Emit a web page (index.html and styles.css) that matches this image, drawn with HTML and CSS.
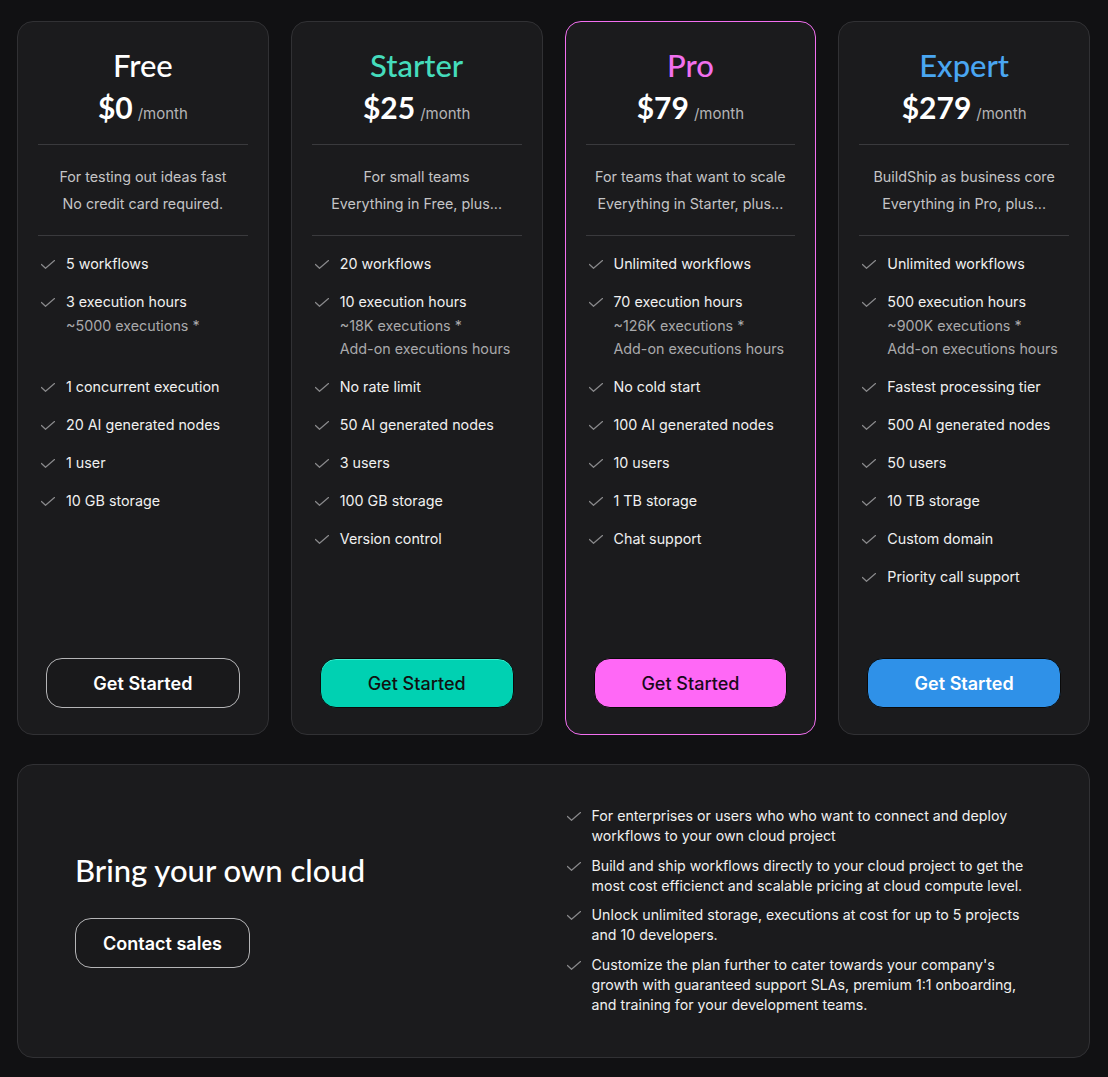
FILE: index.html
```html
<!DOCTYPE html>
<html lang="en">
<head>
<meta charset="utf-8">
<title>Pricing</title>
<link rel="stylesheet" href="styles.css">
</head>
<body>
<main class="page">
  <section class="plans">
    <article class="plan">
      <header class="plan-head">
        <h2 class="plan-name">Free</h2>
        <p class="plan-price"><span class="amount">$0</span><span class="per">/month</span></p>
      </header>
      <div class="plan-desc"><p>For testing out ideas fast</p><p>No credit card required.</p></div>
      <ul class="features">
        <li><svg class="check" viewBox="0 0 14 9"><polyline points="0.5,4.5 4.5,8.3 13.5,0.5"/></svg><div><p>5 workflows</p></div></li>
        <li><svg class="check" viewBox="0 0 14 9"><polyline points="0.5,4.5 4.5,8.3 13.5,0.5"/></svg><div><p>3 execution hours</p><p class="sub">~5000 executions *</p><p class="sub">&nbsp;</p></div></li>
        <li><svg class="check" viewBox="0 0 14 9"><polyline points="0.5,4.5 4.5,8.3 13.5,0.5"/></svg><div><p>1 concurrent execution</p></div></li>
        <li><svg class="check" viewBox="0 0 14 9"><polyline points="0.5,4.5 4.5,8.3 13.5,0.5"/></svg><div><p>20 AI generated nodes</p></div></li>
        <li><svg class="check" viewBox="0 0 14 9"><polyline points="0.5,4.5 4.5,8.3 13.5,0.5"/></svg><div><p>1 user</p></div></li>
        <li><svg class="check" viewBox="0 0 14 9"><polyline points="0.5,4.5 4.5,8.3 13.5,0.5"/></svg><div><p>10 GB storage</p></div></li>
      </ul>
      <button class="btn btn-outline">Get Started</button>
    </article>

    <article class="plan">
      <header class="plan-head">
        <h2 class="plan-name starter">Starter</h2>
        <p class="plan-price"><span class="amount">$25</span><span class="per">/month</span></p>
      </header>
      <div class="plan-desc"><p>For small teams</p><p>Everything in Free, plus...</p></div>
      <ul class="features">
        <li><svg class="check" viewBox="0 0 14 9"><polyline points="0.5,4.5 4.5,8.3 13.5,0.5"/></svg><div><p>20 workflows</p></div></li>
        <li><svg class="check" viewBox="0 0 14 9"><polyline points="0.5,4.5 4.5,8.3 13.5,0.5"/></svg><div><p>10 execution hours</p><p class="sub">~18K executions *</p><p class="sub">Add-on executions hours</p></div></li>
        <li><svg class="check" viewBox="0 0 14 9"><polyline points="0.5,4.5 4.5,8.3 13.5,0.5"/></svg><div><p>No rate limit</p></div></li>
        <li><svg class="check" viewBox="0 0 14 9"><polyline points="0.5,4.5 4.5,8.3 13.5,0.5"/></svg><div><p>50 AI generated nodes</p></div></li>
        <li><svg class="check" viewBox="0 0 14 9"><polyline points="0.5,4.5 4.5,8.3 13.5,0.5"/></svg><div><p>3 users</p></div></li>
        <li><svg class="check" viewBox="0 0 14 9"><polyline points="0.5,4.5 4.5,8.3 13.5,0.5"/></svg><div><p>100 GB storage</p></div></li>
        <li><svg class="check" viewBox="0 0 14 9"><polyline points="0.5,4.5 4.5,8.3 13.5,0.5"/></svg><div><p>Version control</p></div></li>
      </ul>
      <button class="btn btn-teal">Get Started</button>
    </article>

    <article class="plan plan-featured">
      <header class="plan-head">
        <h2 class="plan-name pro">Pro</h2>
        <p class="plan-price"><span class="amount">$79</span><span class="per">/month</span></p>
      </header>
      <div class="plan-desc"><p>For teams that want to scale</p><p>Everything in Starter, plus...</p></div>
      <ul class="features">
        <li><svg class="check" viewBox="0 0 14 9"><polyline points="0.5,4.5 4.5,8.3 13.5,0.5"/></svg><div><p>Unlimited workflows</p></div></li>
        <li><svg class="check" viewBox="0 0 14 9"><polyline points="0.5,4.5 4.5,8.3 13.5,0.5"/></svg><div><p>70 execution hours</p><p class="sub">~126K executions *</p><p class="sub">Add-on executions hours</p></div></li>
        <li><svg class="check" viewBox="0 0 14 9"><polyline points="0.5,4.5 4.5,8.3 13.5,0.5"/></svg><div><p>No cold start</p></div></li>
        <li><svg class="check" viewBox="0 0 14 9"><polyline points="0.5,4.5 4.5,8.3 13.5,0.5"/></svg><div><p>100 AI generated nodes</p></div></li>
        <li><svg class="check" viewBox="0 0 14 9"><polyline points="0.5,4.5 4.5,8.3 13.5,0.5"/></svg><div><p>10 users</p></div></li>
        <li><svg class="check" viewBox="0 0 14 9"><polyline points="0.5,4.5 4.5,8.3 13.5,0.5"/></svg><div><p>1 TB storage</p></div></li>
        <li><svg class="check" viewBox="0 0 14 9"><polyline points="0.5,4.5 4.5,8.3 13.5,0.5"/></svg><div><p>Chat support</p></div></li>
      </ul>
      <button class="btn btn-pink">Get Started</button>
    </article>

    <article class="plan">
      <header class="plan-head">
        <h2 class="plan-name expert">Expert</h2>
        <p class="plan-price"><span class="amount">$279</span><span class="per">/month</span></p>
      </header>
      <div class="plan-desc"><p>BuildShip as business core</p><p>Everything in Pro, plus...</p></div>
      <ul class="features">
        <li><svg class="check" viewBox="0 0 14 9"><polyline points="0.5,4.5 4.5,8.3 13.5,0.5"/></svg><div><p>Unlimited workflows</p></div></li>
        <li><svg class="check" viewBox="0 0 14 9"><polyline points="0.5,4.5 4.5,8.3 13.5,0.5"/></svg><div><p>500 execution hours</p><p class="sub">~900K executions *</p><p class="sub">Add-on executions hours</p></div></li>
        <li><svg class="check" viewBox="0 0 14 9"><polyline points="0.5,4.5 4.5,8.3 13.5,0.5"/></svg><div><p>Fastest processing tier</p></div></li>
        <li><svg class="check" viewBox="0 0 14 9"><polyline points="0.5,4.5 4.5,8.3 13.5,0.5"/></svg><div><p>500 AI generated nodes</p></div></li>
        <li><svg class="check" viewBox="0 0 14 9"><polyline points="0.5,4.5 4.5,8.3 13.5,0.5"/></svg><div><p>50 users</p></div></li>
        <li><svg class="check" viewBox="0 0 14 9"><polyline points="0.5,4.5 4.5,8.3 13.5,0.5"/></svg><div><p>10 TB storage</p></div></li>
        <li><svg class="check" viewBox="0 0 14 9"><polyline points="0.5,4.5 4.5,8.3 13.5,0.5"/></svg><div><p>Custom domain</p></div></li>
        <li><svg class="check" viewBox="0 0 14 9"><polyline points="0.5,4.5 4.5,8.3 13.5,0.5"/></svg><div><p>Priority call support</p></div></li>
      </ul>
      <button class="btn btn-blue">Get Started</button>
    </article>
  </section>

  <section class="cloud">
    <div class="cloud-left">
      <h2 class="cloud-title">Bring your own cloud</h2>
      <button class="btn btn-outline btn-contact">Contact sales</button>
    </div>
    <ul class="cloud-list">
      <li><svg class="check" viewBox="0 0 14 9"><polyline points="0.5,4.5 4.5,8.3 13.5,0.5"/></svg><p>For enterprises or users who who want to connect and deploy workflows to your own cloud project</p></li>
      <li><svg class="check" viewBox="0 0 14 9"><polyline points="0.5,4.5 4.5,8.3 13.5,0.5"/></svg><p>Build and ship workflows directly to your cloud project to get the most cost efficienct and scalable pricing at cloud compute level.</p></li>
      <li><svg class="check" viewBox="0 0 14 9"><polyline points="0.5,4.5 4.5,8.3 13.5,0.5"/></svg><p>Unlock unlimited storage, executions at cost for up to 5 projects and 10 developers.</p></li>
      <li><svg class="check" viewBox="0 0 14 9"><polyline points="0.5,4.5 4.5,8.3 13.5,0.5"/></svg><p>Customize the plan further to cater towards your company's growth with guaranteed support SLAs, premium 1:1 onboarding, and training for your development teams.</p></li>
    </ul>
  </section>
</main>
</body>
</html>
```

FILE: styles.css
```css
* { box-sizing: border-box; }
html, body { margin: 0; padding: 0; }
body {
  background: #111113;
  color: #f2f2f2;
  font-family: "Inter", "Liberation Sans", sans-serif;
  -webkit-font-smoothing: antialiased;
}
p, h2, ul { margin: 0; padding: 0; }
ul { list-style: none; }

.page {
  padding: 21px 18px 20px 17px;
  display: flex;
  flex-direction: column;
  gap: 29px;
}

.plans {
  display: grid;
  grid-template-columns: repeat(4, 1fr);
  gap: 22px;
}

.plan {
  background: #1b1b1d;
  border: 1px solid #313134;
  border-radius: 16px;
  padding: 25px 20px 26px;
  height: 714px;
  display: flex;
  flex-direction: column;
}
.plan-featured { border: 1.5px solid #f26ff0; }

.plan-head {
  text-align: center;
  padding-bottom: 19px;
  border-bottom: 1px solid #3a3a3d;
}
.plan-name {
  font-family: "Lato", "Inter", sans-serif;
  font-weight: 500;
  font-size: 31px;
  line-height: 36px;
  color: #ffffff;
}
.plan-name.starter { color: #45dcbc; }
.plan-name.pro { color: #f170ee; }
.plan-name.expert { color: #4aa6f2; }

.plan-price {
  margin-top: 6px;
  height: 36px;
  display: flex;
  justify-content: center;
  align-items: baseline;
  gap: 5px;
}
.amount {
  font-family: "Lato", "Inter", sans-serif;
  font-weight: 700;
  font-size: 30px;
  line-height: 36px;
  color: #ffffff;
}
.per {
  font-size: 15px;
  line-height: 36px;
  color: #b4b4b6;
}

.plan-desc {
  text-align: center;
  padding: 18px 0 18px;
  border-bottom: 1px solid #3a3a3d;
  font-size: 14.3px;
  line-height: 27px;
  color: #c4c4c6;
}

.features {
  padding: 16px 0 0 3px;
  display: flex;
  flex-direction: column;
  gap: 14.5px;
}
.features li {
  display: flex;
  align-items: flex-start;
  gap: 11px;
  font-size: 14.3px;
  line-height: 23.5px;
  color: #f0f0f0;
}
.features .sub { color: #a9a9ab; }

.check {
  flex: none;
  width: 14px;
  height: 9px;
  margin-top: 8px;
  fill: none;
  stroke: #8a8a8c;
  stroke-width: 1.2;
  stroke-linecap: round;
  stroke-linejoin: round;
}

.btn {
  font-family: "Inter", "Liberation Sans", sans-serif;
  font-size: 18px;
  font-weight: 600;
  height: 50px;
  border-radius: 16px;
  cursor: pointer;
}
.plan .btn {
  margin: auto 8px 0;
}
.btn-outline {
  background: #19191b;
  color: #ffffff;
  border: 1.5px solid #b5b5b7;
}
.btn-teal {
  background: #00d1b2;
  color: #111111;
  border: 1px solid #0a0a0a;
  box-shadow: inset 0 1px 0 #3ff0d0;
  font-weight: 500;
}
.btn-pink {
  background: #ff68f6;
  color: #1a0a1a;
  border: 1px solid #0a0a0a;
  font-weight: 500;
}
.btn-blue {
  background: #2f91e8;
  color: #ffffff;
  border: 1px solid #0a0a0a;
}

.cloud {
  background: #1b1b1d;
  border: 1px solid #313134;
  border-radius: 16px;
  padding: 41px 57px 42px;
  display: grid;
  grid-template-columns: 1fr 1fr;
  gap: 26px;
  align-items: center;
}
.cloud-left {
  display: flex;
  flex-direction: column;
  align-items: flex-start;
  gap: 30px;
}
.cloud-title {
  font-family: "Lato", "Inter", sans-serif;
  font-weight: 500;
  font-size: 31px;
  line-height: 36px;
  color: #ffffff;
}
.btn-contact {
  width: 175px;
  height: 50px;
}

.cloud-list {
  display: flex;
  flex-direction: column;
  gap: 9.5px;
}
.cloud-list li {
  display: flex;
  align-items: flex-start;
  gap: 11px;
  font-size: 14.2px;
  line-height: 20px;
  color: #f0f0f0;
}
.cloud-list .check { margin-top: 6px; }
```
